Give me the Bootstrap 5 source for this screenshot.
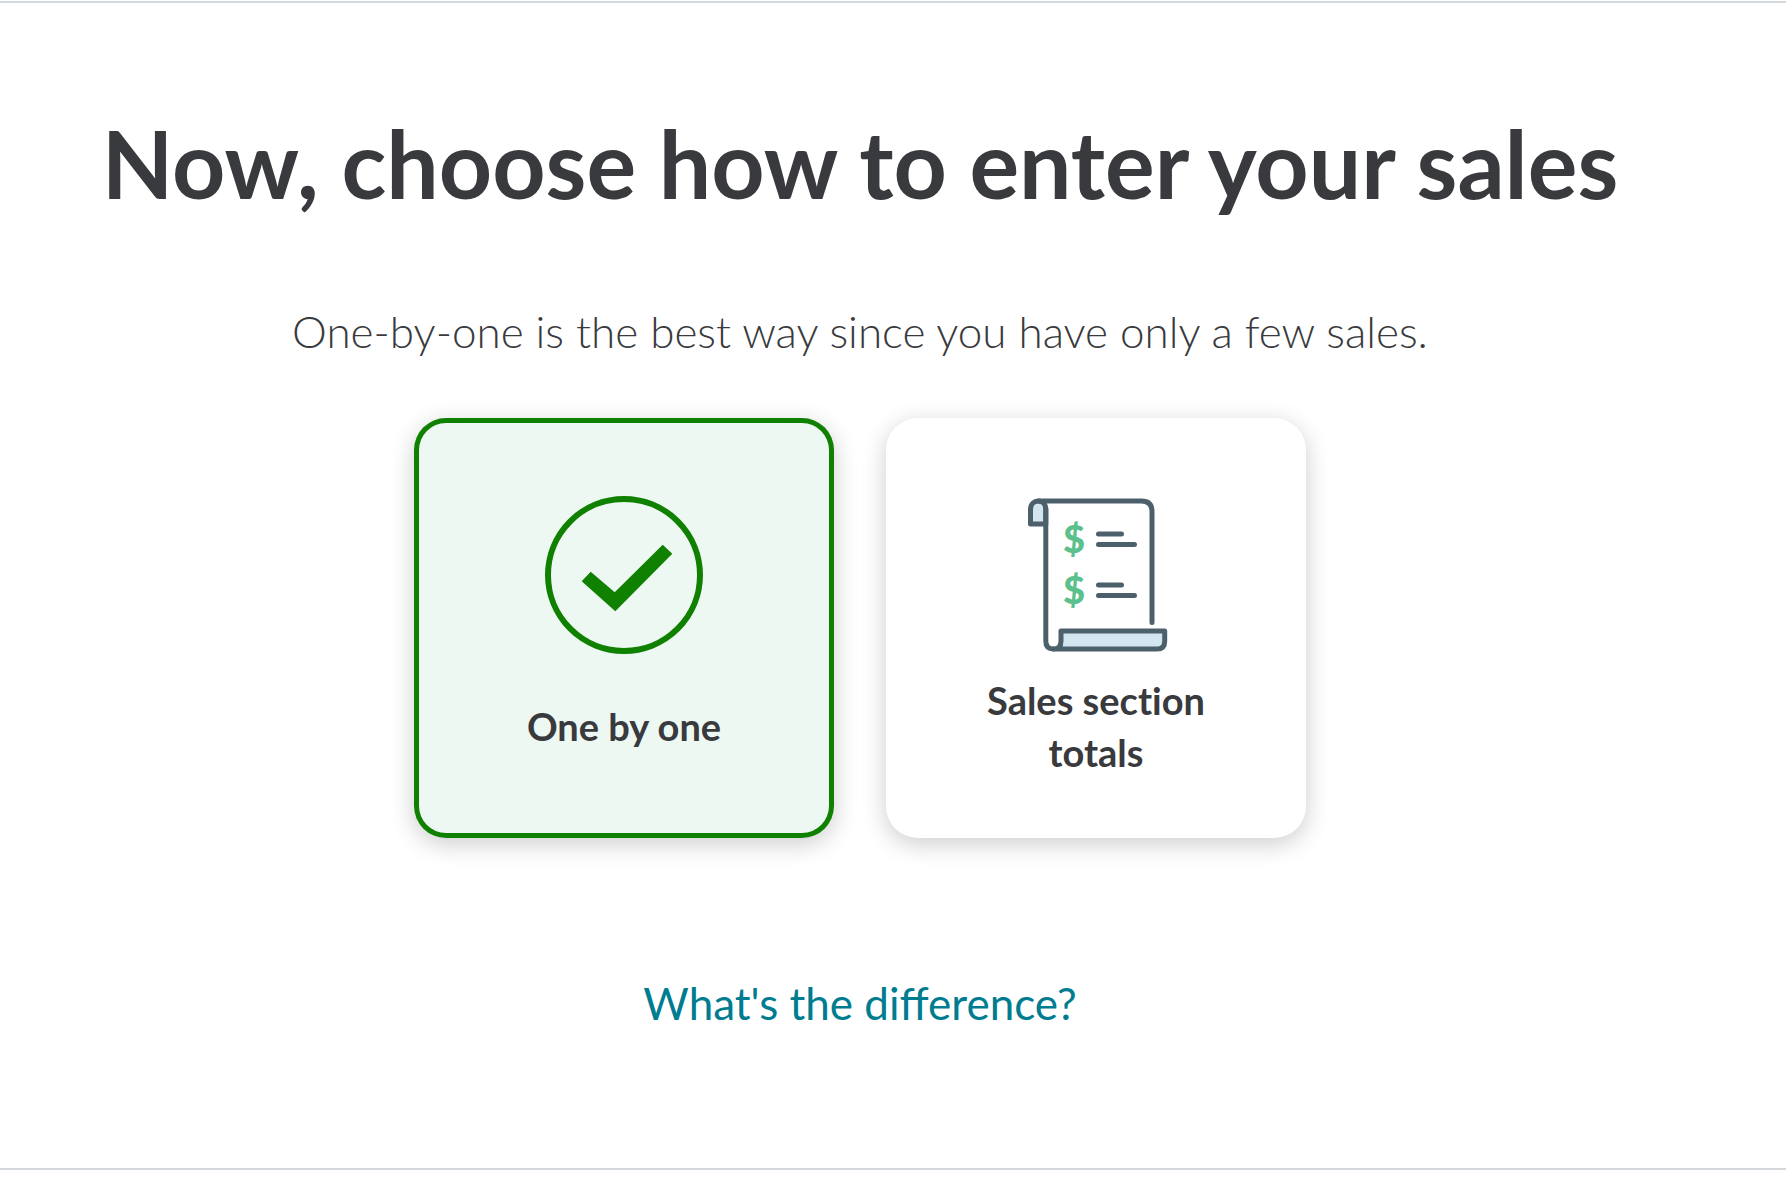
<!DOCTYPE html>
<html lang="en">
<head>
<meta charset="utf-8">
<meta name="viewport" content="width=device-width, initial-scale=1">
<title>Choose how to enter your sales</title>
<link href="https://cdn.jsdelivr.net/npm/bootstrap@5.3.0/dist/css/bootstrap.min.css" rel="stylesheet">
<style>
body { font-family: Lato, "Open Sans", sans-serif; color: #393a3d; background: #fff; }
.sales-step { margin-top: 1px; padding: 100px 66px 137px 0; border-top: 2px solid #d4d9dd; border-bottom: 2px solid #d4d7dc; }
.step-title { font-size: 93px; line-height: 120px; font-weight: 700; margin-bottom: 78px; }
.step-hint { font-size: 44px; line-height: 60px; font-weight: 300; margin-bottom: 57px; }
.choices { gap: 52px; margin-bottom: 137px; }
.choice { width: 420px; min-height: 420px; padding: 78px 60px 60px; gap: 20px; border-radius: 32px; background: #fff; box-shadow: 0 6px 24px rgba(0,0,0,.2); cursor: pointer; }
.btn-check:checked + .choice { background: #eef8f3; box-shadow: inset 0 0 0 5px #108000, 0 6px 24px rgba(0,0,0,.2); }
.btn-check:focus-visible + .choice { outline: 3px solid #007c91; outline-offset: 4px; }
.choice-name { min-height: 104px; font-size: 38px; line-height: 52px; font-weight: 700; font-variant-ligatures: none; }
.help-link { font-size: 44px; line-height: 56px; color: #007c91; }
.dollar { font: 900 38px Lato, sans-serif; fill: #5bc08b; text-anchor: middle; }
</style>
</head>
<body>
<main class="sales-step d-flex flex-column align-items-center text-center">
  <h1 class="step-title">Now, choose how to enter your sales</h1>
  <p class="step-hint" id="hint">One-by-one is the best way since you have only a few sales.</p>
  <div class="choices d-flex flex-wrap justify-content-center" role="radiogroup" aria-labelledby="hint">
    <input class="btn-check" type="radio" name="entry" id="one" checked>
    <label class="choice d-flex flex-column align-items-center" for="one">
      <svg width="158" height="158" viewBox="0 0 158 158" aria-hidden="true">
        <circle cx="79" cy="79" r="76" fill="none" stroke="#108000" stroke-width="6"/>
        <path fill="#108000" d="M36.7 85.3 45.7 75.7 69.7 96.3 117.7 48.7 127.3 57.7 70.3 115.3Z"/>
      </svg>
      <span class="choice-name d-flex align-items-center">One by one</span>
    </label>
    <input class="btn-check" type="radio" name="entry" id="totals">
    <label class="choice d-flex flex-column align-items-center" for="totals">
      <svg width="144" height="158" viewBox="-2 0 144 158" aria-hidden="true">
        <g stroke="#4c606c" stroke-width="5" stroke-linecap="round" stroke-linejoin="round" fill="none">
          <path fill="#d3e5ef" d="M19.8 28H4.5V13.5C4.5 8 8 5 12.3 5S19.8 8 19.8 13.5Z"/>
          <path d="M12.3 5H115.5Q126 5 126 15.5V126.5M19.8 13V145Q19.8 153 27.5 153"/>
          <path fill="#d3e5ef" stroke="none" d="M35 135H138.7V145.5Q138.7 153 131 153H33Q35 151 35 146Z"/>
          <path d="M27.5 153Q35 153 35 145V135H138.7V145.5Q138.7 153 131 153H27.5"/>
          <path d="M72.5 38H95.5M72.5 48.5H108.5M72.5 89H95.5M72.5 99.5H108.5"/>
        </g>
        <text class="dollar" x="48" y="57">$</text>
        <text class="dollar" x="48" y="108">$</text>
      </svg>
      <span class="choice-name d-flex align-items-center">Sales section totals</span>
    </label>
  </div>
  <a class="help-link text-decoration-none" href="#difference">What's the difference?</a>
</main>
<script src="https://cdn.jsdelivr.net/npm/bootstrap@5.3.0/dist/js/bootstrap.bundle.min.js"></script>
</body>
</html>
